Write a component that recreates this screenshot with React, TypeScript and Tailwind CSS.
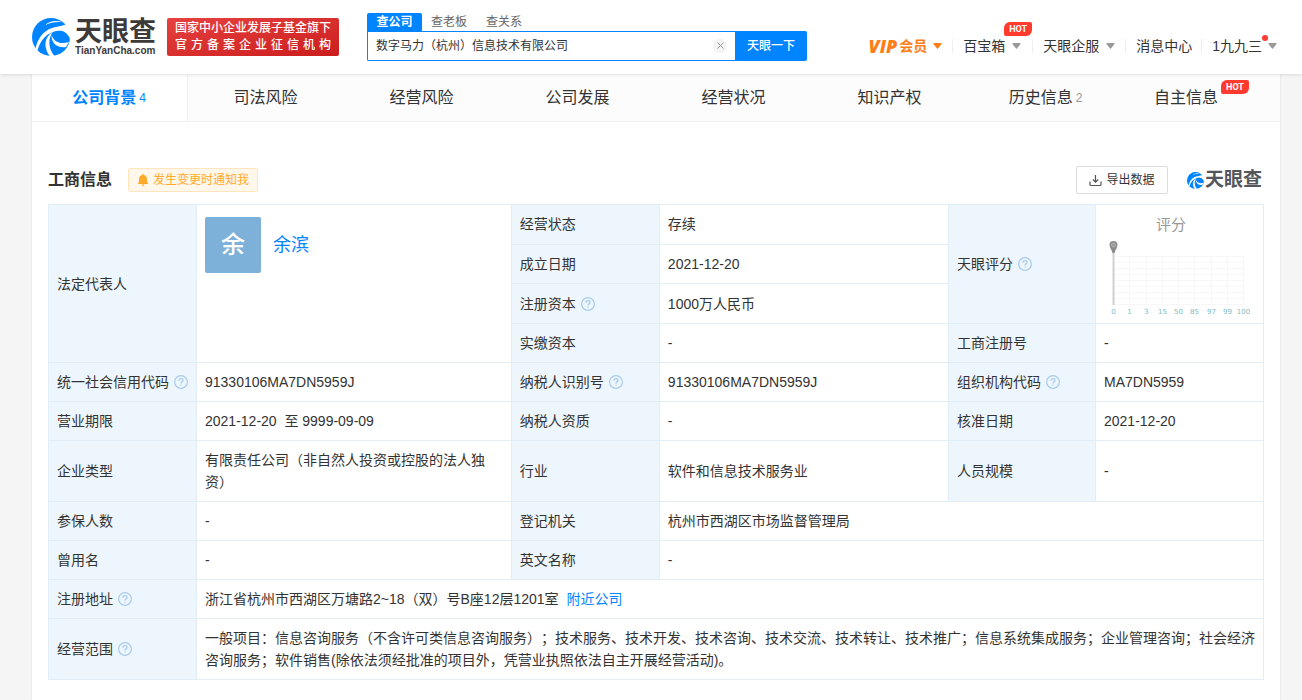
import React, { useState } from 'react';

const navTabs = [
  { name: '公司背景', count: '4' },
  { name: '司法风险' },
  { name: '经营风险' },
  { name: '公司发展' },
  { name: '经营状况' },
  { name: '知识产权' },
  { name: '历史信息', count: '2' },
  { name: '自主信息', hot: true },
];

const scoreLabels = ['0', '1', '3', '15', '50', '85', '97', '99', '100'];

function LogoMark({ className }: { className: string }) {
  return (
    <svg className={className} viewBox="0 0 38 38" aria-hidden="true">
      <circle cx="19" cy="19" r="19" fill="#0084ff" />
      <path
        fill="#fff"
        d="M3.500 30.500C5.500 21 11 13 20 10C25 8.400 30 8.200 33.500 6.500L38.500 13L38.500 22C36 15 31 12 25 13C15 14.500 8 22 5.500 33Z"
      />
      <path
        fill="#0084ff"
        d="M20.500 15C26 11.500 33.500 12.500 35.800 18.500C37 22 36.500 24.500 35 26C29 27.500 22.500 26 20 20.500C19.500 18.500 19.600 16.500 20.500 15Z"
      />
      <path
        fill="#fff"
        d="M20.800 14C12.500 18.500 11 29 17.500 38L22.500 38C16.500 31 15.500 21 20.800 14Z"
      />
      <path
        fill="#fff"
        d="M19.600 17C19 24.500 25 30.500 34 29L37 24C28 27 21.500 23.500 19.600 17Z"
      />
      <path fill="#fff" d="M13 7C17.500 3 24 2 30.500 4.200C24 3.700 18 4.700 13 7Z" />
    </svg>
  );
}

function Caret({ className }: { className: string }) {
  return (
    <svg className={className} width="9" height="6" viewBox="0 0 9 6" aria-hidden="true">
      <path fill="currentColor" d="M1 0h7q1 0 .5 1L5 5.600q-.5.500-1 0L.500 1Q0 0 1 0z" />
    </svg>
  );
}

function Hot() {
  return (
    <span className="flex h-[14px] w-7 items-center justify-center rounded-tl-md rounded-tr-xs rounded-br-md rounded-bl-xs bg-[#ff3b30] font-[Roboto,sans-serif] text-[9px] leading-none font-bold text-white">
      HOT
    </span>
  );
}

function Help() {
  return (
    <svg className="ml-[5px] inline-block size-[14px] align-[-2px]" viewBox="0 0 14 14" fill="none" stroke="#a9cbea" aria-hidden="true">
      <circle cx="7" cy="7" r="6.400" strokeWidth="1.200" />
      <path strokeWidth="1.300" d="M5 5.700C5 4.400 5.900 3.700 7 3.700s2 .7 2 1.800c0 1.300-2 1.500-2 3" />
      <path strokeWidth="1.300" d="M7 9.400v1.200" />
    </svg>
  );
}

function Label({ children, help, rowSpan }: { children: React.ReactNode; help?: boolean; rowSpan?: number }) {
  return (
    <th scope="row" rowSpan={rowSpan} className="border border-[#e1eef8] bg-[#eef6fd] p-2 text-left align-middle font-normal whitespace-nowrap">
      {children}
      {help && <Help />}
    </th>
  );
}

function Value({ children, colSpan }: { children: React.ReactNode; colSpan?: number }) {
  return (
    <td colSpan={colSpan} className="border border-[#e1eef8] p-2 align-middle">
      {children}
    </td>
  );
}

function ScoreChart() {
  return (
    <svg className="block h-[102px] w-[150px]" viewBox="0 0 150 102" role="img" aria-label="评分">
      <text x="67" y="17" fontSize="15" fill="#999" textAnchor="middle">评分</text>
      <g stroke="#f7f7f7">
        {scoreLabels.map((s, i) => (
          <path key={s} d={`M${9.5 + Math.round(i * 16.25)} 43V92`} />
        ))}
        {scoreLabels.map((s, i) => (
          <path key={s} d={`M9.500 ${43.5 + i * 6}H139.500`} />
        ))}
      </g>
      <path stroke="#d0d0d0" strokeWidth="2" d="M9.500 38V92" />
      <path fill="#8b8b8b" d="M9.500 28a4 4 0 0 1 4 4c0 3-2.500 5-3 8h-2c-.5-3-3-5-3-8a4 4 0 0 1 4-4z" />
      <circle cx="9.500" cy="32" r="2" fill="#999" stroke="#b4b4b4" />
      <g fill="#7dbac4" fontSize="7" fontFamily="DejaVu Sans, sans-serif" textAnchor="middle">
        {scoreLabels.map((s, i) => (
          <text key={s} x={9.5 + Math.round(i * 16.25)} y="101">{s}</text>
        ))}
      </g>
    </svg>
  );
}

function Header() {
  const [keyword, setKeyword] = useState('数字马力（杭州）信息技术有限公司');

  return (
    <header className="relative z-10 flex h-[74px] items-center justify-between bg-white pr-[25px] pl-8 shadow-[0_0_4px_rgba(0,0,0,0.18)]">
      <div className="flex items-center">
        <a href="#" className="flex items-center gap-[5px] text-[#3e3a39]">
          <LogoMark className="size-[38px]" />
          <span className="flex flex-col pt-px font-bold">
            <span className="text-[27px] leading-[26px]">天眼查</span>
            <span className="text-[10px] leading-3">TianYanCha.com</span>
          </span>
        </a>
        <div className="ml-[11px] w-[172px] rounded-xs bg-linear-to-br from-[#e64040] to-[#cb1c1c] px-2 py-[2px] text-xs leading-[17px] font-medium whitespace-nowrap text-white">
          <p>国家中小企业发展子基金旗下</p>
          <p className="[text-align-last:justify]">官方备案企业征信机构</p>
        </div>
        <form className="ml-7 w-[440px] pb-px" onSubmit={(e) => e.preventDefault()}>
          <div className="flex h-[18px] text-xs leading-[18px] text-[#666]">
            <button type="button" className="mr-[9px] w-[55px] rounded-t-xs bg-[#0084ff] font-bold text-white">查公司</button>
            <button type="button" className="mr-[19px]">查老板</button>
            <button type="button">查关系</button>
          </div>
          <div className="flex h-[30px]">
            <div className="flex min-w-0 flex-1 items-center rounded-bl-xs border border-r-0 border-[#0084ff] px-2">
              <input
                aria-label="搜索公司"
                className="min-w-0 flex-1 text-xs text-[#333] outline-none"
                value={keyword}
                onChange={(e) => setKeyword(e.target.value)}
              />
              <button type="button" aria-label="清空" onClick={() => setKeyword('')} className="flex size-[14px] items-center justify-center rounded-full bg-[#f3f3f3]">
                <svg width="7" height="7" viewBox="0 0 7 7" stroke="#999"><path d="M.5.500l6 6M6.500.500l-6 6" /></svg>
              </button>
            </div>
            <button type="submit" className="w-[72px] rounded-r-xs bg-[#0084ff] text-xs font-medium text-white">天眼一下</button>
          </div>
        </form>
      </div>

      <nav className="flex items-center pt-[18px] text-sm leading-5 whitespace-nowrap text-[#333]">
        <a href="#" className="flex items-center font-bold text-[#ff7d18]">
          <span className="mr-[2px] font-['Open_Sans',sans-serif] text-lg leading-5 font-extrabold italic">VIP</span>
          会员
          <Caret className="ml-[6px]" />
        </a>
        <i className="mx-[10px] h-[14px] w-px bg-[#eee]" />
        <a href="#" className="relative flex items-center">
          百宝箱
          <Caret className="ml-[7px] text-[#999]" />
          <span className="absolute -top-[14px] left-[41px]"><Hot /></span>
        </a>
        <i className="mr-[10px] ml-[11px] h-[14px] w-px bg-[#eee]" />
        <a href="#" className="flex items-center">
          天眼企服
          <Caret className="ml-[7px] text-[#999]" />
        </a>
        <i className="mx-[10px] h-[14px] w-px bg-[#eee]" />
        <a href="#">消息中心</a>
        <i className="mr-[10px] ml-[9px] h-[14px] w-px bg-[#eee]" />
        <a href="#" className="relative flex items-center">
          1九九三
          <Caret className="ml-[6px] text-[#999]" />
          <i className="absolute -top-px right-[9px] size-[6px] rounded-full bg-[#ff3b30]" />
        </a>
      </nav>
    </header>
  );
}

function Tabs() {
  const [active, setActive] = useState('公司背景');

  return (
    <nav className="grid h-12 grid-cols-8 text-base text-[#333]">
      {navTabs.map((tab) => (
        <button
          key={tab.name}
          type="button"
          onClick={() => setActive(tab.name)}
          className={`flex items-center justify-center gap-[3px] border-b border-[#f0f0f0] pr-px ${
            tab.name === active ? 'border-r bg-white font-bold text-[#0084ff]' : 'bg-[#fcfcfc]'
          }`}
        >
          {tab.name}
          {tab.count && (
            <span className={`text-xs font-normal ${tab.name === active ? '' : 'text-[#999]'}`}>{tab.count}</span>
          )}
          {tab.hot && <span className="self-start pt-[6px]"><Hot /></span>}
        </button>
      ))}
    </nav>
  );
}

function App() {
  return (
    <div className="min-h-screen bg-[#f5f5f5] font-['Liberation_Sans','Noto_Sans_CJK_SC',sans-serif] [text-spacing-trim:space-all]">
      <Header />
      <main className="mr-[22px] ml-8 min-h-[626px] bg-white shadow-[0_0_2px_rgba(0,0,0,0.12)]">
        <Tabs />
        <section className="px-4 pt-11 pb-5">
          <div className="mb-[10px] flex h-7 items-center">
            <h2 className="text-base font-bold text-[#333]">工商信息</h2>
            <button type="button" className="ml-4 flex h-6 items-center gap-1 rounded-xs border border-[#ffe5bd] bg-[#fff7ea] px-2 text-xs text-[#ffaa2b]">
              <svg width="12" height="12" viewBox="0 0 12 12" fill="currentColor" aria-hidden="true">
                <path d="M6 0c.6 0 .9.400.9.900C9 1.300 10 3 10 5v3l1 1.200v.8H1v-.8L2 8V5c0-2 1-3.700 3.100-4.100C5.100.400 5.400 0 6 0zM4.600 10.600h2.800C7.300 11.500 6.700 12 6 12s-1.300-.5-1.400-1.400z" />
              </svg>
              发生变更时通知我
            </button>
            <button type="button" className="ml-auto flex h-7 w-[92px] items-center justify-center gap-1 rounded-xs border border-[#ddd] text-xs text-[#333]">
              <svg width="13" height="13" viewBox="0 0 13 13" fill="none" stroke="#555" strokeWidth="1.200" aria-hidden="true">
                <path d="M6.500 1v7M3.800 5.500l2.700 2.700 2.700-2.700M1 7.500v3q0 1 1 1h9q1 0 1-1v-3" />
              </svg>
              导出数据
            </button>
            <div className="mr-[2px] ml-[19px] flex items-center gap-px text-[19px] leading-7 font-bold text-[#55565c]">
              <LogoMark className="size-[17px]" />
              天眼查
            </div>
          </div>

          <table className="w-full table-fixed border-collapse text-sm leading-[22px] text-[#333]">
            <colgroup>
              <col className="w-[148px]" />
              <col />
              <col className="w-[148px]" />
              <col className="w-[23.8%]" />
              <col className="w-[147px]" />
              <col className="w-[168px]" />
            </colgroup>
            <tbody>
              <tr>
                <Label rowSpan={4}>法定代表人</Label>
                <td rowSpan={4} className="border border-[#e1eef8] px-2 py-3 align-top">
                  <div className="flex items-center gap-3">
                    <span className="flex size-14 items-center justify-center rounded-xs bg-[#7eb1d9] text-2xl font-medium text-white">余</span>
                    <a href="#" className="text-lg text-[#0084ff]">余滨</a>
                  </div>
                </td>
                <Label>经营状态</Label>
                <Value>存续</Value>
                <Label rowSpan={3} help>天眼评分</Label>
                <td rowSpan={3} className="border border-[#e1eef8] p-2">
                  <ScoreChart />
                </td>
              </tr>
              <tr>
                <Label>成立日期</Label>
                <Value>2021-12-20</Value>
              </tr>
              <tr>
                <Label help>注册资本</Label>
                <Value>1000万人民币</Value>
              </tr>
              <tr>
                <Label>实缴资本</Label>
                <Value>-</Value>
                <Label>工商注册号</Label>
                <Value>-</Value>
              </tr>
              <tr>
                <Label help>统一社会信用代码</Label>
                <Value>91330106MA7DN5959J</Value>
                <Label help>纳税人识别号</Label>
                <Value>91330106MA7DN5959J</Value>
                <Label help>组织机构代码</Label>
                <Value>MA7DN5959</Value>
              </tr>
              <tr>
                <Label>营业期限</Label>
                <Value>2021-12-20&nbsp; 至 9999-09-09</Value>
                <Label>纳税人资质</Label>
                <Value>-</Value>
                <Label>核准日期</Label>
                <Value>2021-12-20</Value>
              </tr>
              <tr>
                <Label>企业类型</Label>
                <Value>有限责任公司（非自然人投资或控股的法人独资）</Value>
                <Label>行业</Label>
                <Value>软件和信息技术服务业</Value>
                <Label>人员规模</Label>
                <Value>-</Value>
              </tr>
              <tr>
                <Label>参保人数</Label>
                <Value>-</Value>
                <Label>登记机关</Label>
                <Value colSpan={3}>杭州市西湖区市场监督管理局</Value>
              </tr>
              <tr>
                <Label>曾用名</Label>
                <Value>-</Value>
                <Label>英文名称</Label>
                <Value colSpan={3}>-</Value>
              </tr>
              <tr>
                <Label help>注册地址</Label>
                <Value colSpan={5}>
                  浙江省杭州市西湖区万塘路2~18（双）号B座12层1201室
                  <a href="#" className="ml-2 text-[#0084ff]">附近公司</a>
                </Value>
              </tr>
              <tr>
                <Label help>经营范围</Label>
                <Value colSpan={5}>
                  一般项目：信息咨询服务（不含许可类信息咨询服务）；技术服务、技术开发、技术咨询、技术交流、技术转让、技术推广；信息系统集成服务；企业管理咨询；社会经济咨询服务；软件销售(除依法须经批准的项目外，凭营业执照依法自主开展经营活动)。
                </Value>
              </tr>
            </tbody>
          </table>
        </section>
      </main>
    </div>
  );
}

export default App;
